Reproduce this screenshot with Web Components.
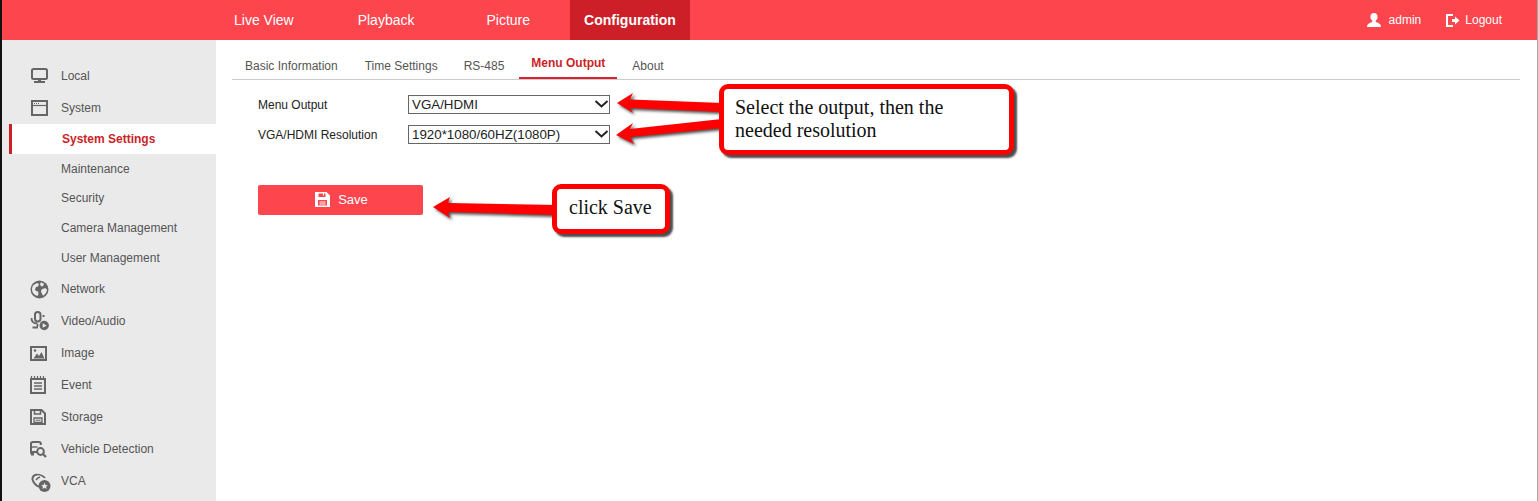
<!DOCTYPE html>
<html>
<head>
<meta charset="utf-8">
<title>Menu Output</title>
<style>
  html, body { margin: 0; padding: 0; background: #fff; }
  body { width: 1538px; height: 501px; overflow: hidden; font-family: "Liberation Sans", Arial, sans-serif; }
</style>
</head>
<body>
<web-app></web-app>

<template id="tpl-app">
  <style>
    :host { display: block; position: relative; width: 1538px; height: 501px; overflow: hidden; border-left: 2px solid #111; border-right: 1px solid #a8a8a8; box-sizing: border-box; }
    .edge { position: absolute; left: -2px; top: 79px; width: 2px; height: 19px; background: #0a7a12; }
    .body { display: flex; height: 461px; }
    side-menu { flex: none; }
    config-panel { flex: 1; }
  </style>
  <div class="edge"></div>
  <top-bar></top-bar>
  <div class="body">
    <side-menu></side-menu>
    <config-panel></config-panel>
  </div>
  <note-layer></note-layer>
</template>

<template id="tpl-top">
  <style>
    :host { display: flex; height: 40px; background: #fd454e; color: #fff; font-size: 14px; align-items: stretch; }
    nav { display: flex; margin-left: 218px; }
    a { display: flex; align-items: center; padding: 0 14px; }
    a.on { background: #cc1f27; font-weight: bold; }
    .user { margin-left: auto; display: flex; align-items: center; font-size: 12px; margin-right: 35px; }
    .user svg { display: block; fill: #fff; }
    .user span { margin-left: 7px; }
    .user .gap { margin-left: 25px; display: flex; align-items: center; }
    .user .gap span { margin-left: 5px; }
  </style>
  <nav>
    <a style="margin-right:36px">Live View</a>
    <a style="margin-right:44px">Playback</a>
    <a style="margin-right:26px">Picture</a>
    <a class="on">Configuration</a>
  </nav>
  <div class="user">
    <svg width="16" height="14" viewBox="0 0 16 14"><path d="M8 0c2.300 0 3.600 1.600 3.600 3.800 0 1.700-.8 3.200-1.900 4v1.300c2 .6 5.300 1.500 5.300 4.900H1c0-3.400 3.300-4.300 5.300-4.900V7.800C5.200 7 4.400 5.500 4.400 3.800 4.400 1.600 5.700 0 8 0z"/></svg>
    <span>admin</span>
    <div class="gap">
      <svg width="14" height="13" viewBox="0 0 14 13"><path d="M0 0h7v2H2v9h5v2H0zM6 5h3V2.500L13.500 6.500 9 10.500V8H6z"/></svg>
      <span>Logout</span>
    </div>
  </div>
</template>

<template id="tpl-item">
  <style>
    :host { display: flex; align-items: center; height: 32px; font-size: 12px; color: #555; padding-left: 28px; }
    .ico { width: 31px; flex: none; display: flex; align-items: center; }
    ::slotted(svg) { display: block; }
  </style>
  <div class="ico"><slot name="icon"></slot></div>
  <div><slot></slot></div>
</template>

<template id="tpl-sub">
  <style>
    :host { display: flex; align-items: center; height: 30px; font-size: 12px; color: #555; padding-left: 59px; }
    :host([active]) { background: #fff; color: #cc1f27; font-weight: bold; box-shadow: inset 3px 0 0 #cc1f27; margin-left: 7px; padding-left: 53px; }
    :host([short]) { height: 29px; }
  </style>
  <slot></slot>
</template>

<template id="tpl-side">
  <style>
    :host { display: block; width: 214px; height: 461px; background: #eaeaea; padding-top: 20px; box-sizing: border-box; overflow: hidden; }
    svg { fill: none; stroke: #666; stroke-width: 2; }
    svg .f { fill: #666; stroke: none; }
    svg .w { fill: #eaeaea; stroke: none; }
  </style>
  <menu-item>
    <svg slot="icon" width="19" height="16" viewBox="0 0 19 16"><rect x="2" y="1" width="15" height="10" rx="1.500"/><path class="f" d="M8 11h3v2.500H8zM4 13h11v2H4z"/></svg>
    Local
  </menu-item>
  <menu-item>
    <svg slot="icon" width="19" height="16" viewBox="0 0 19 16"><rect x="2" y="1" width="15" height="14"/><path d="M2 5.500h15" stroke-width="1.200"/><path d="M4 3.500h5" stroke-width="1" stroke-dasharray="1 1"/></svg>
    System
  </menu-item>
  <div>
    <menu-sub active>System Settings</menu-sub>
    <menu-sub short>Maintenance</menu-sub>
    <menu-sub>Security</menu-sub>
    <menu-sub>Camera Management</menu-sub>
    <menu-sub>User Management</menu-sub>
  </div>
  <menu-item>
    <svg slot="icon" width="19" height="19" viewBox="0 0 19 19"><circle class="f" cx="9.500" cy="9.500" r="9"/><path class="w" d="M3.500 5l3.500-2 2 1-1 2.500-2 .5-1 2.500 1 1.500 2 .5.500 2.500-1 2C4 15 2 12.500 2 9.500 2 7.800 2.600 6.200 3.500 5zM11 2.300l3 1.500-1 2.500h-2l-1-2zM11.500 9.500l3.500-1.500 2 1.500c0 2.500-1.500 5-4 6.300l-1-2-1-2z"/></svg>
    Network
  </menu-item>
  <menu-item>
    <svg slot="icon" width="19" height="20" viewBox="0 0 19 20"><rect x="5" y="1" width="5.500" height="9.500" rx="2.700"/><path d="M1.500 7c0 3.500 2.500 5.500 6 5.500M7.500 13v2.500M2.500 16.500h5.500" stroke-width="1.800"/><path class="f" d="M12.500 4h2v2h-2z"/><circle class="f" cx="14.200" cy="14.500" r="4.700"/><path class="w" d="M12.700 12.200l3.900 2.300-3.900 2.300z"/></svg>
    Video/Audio
  </menu-item>
  <menu-item>
    <svg slot="icon" width="18" height="15" viewBox="0 0 18 15"><rect x="1" y="1" width="15" height="13"/><path class="f" d="M3.500 12.500l3.500-5 2 2.500 2.500-4 3 6.500z"/><circle class="f" cx="5" cy="4.500" r="1.300"/></svg>
    Image
  </menu-item>
  <menu-item>
    <svg slot="icon" width="17" height="18" viewBox="0 0 17 18"><rect x="1" y="3" width="14" height="14"/><path d="M1.500 0v3M4.500 0v3M7.500 0v3M10.500 0v3M13.500 0v3" stroke-width="1.200"/><path d="M4 7h8M4 10h8M4 13h8" stroke-width="1.400"/></svg>
    Event
  </menu-item>
  <menu-item>
    <svg slot="icon" width="17" height="16" viewBox="0 0 17 16"><path d="M1 1h10.500L15 4.500V15H1z"/><path d="M4.500 1v4h6V1" stroke-width="1.600"/><path d="M4 9h8v4.500H4z" stroke-width="1.300"/><path d="M5.500 11.200h5" stroke-width="1"/></svg>
    Storage
  </menu-item>
  <menu-item>
    <svg slot="icon" width="18" height="17" viewBox="0 0 18 17"><path d="M7 11H1V2.500C1 1.500 1.800 1 3 1h6c1 0 1.800.5 1.800 1.500V4"/><path d="M1.500 6h6" stroke-width="1.400"/><path class="f" d="M0 11h4v3.500H1z"/><circle cx="10.500" cy="10.500" r="3.400"/><path d="M13 13l3 3" stroke-width="2.200"/></svg>
    Vehicle Detection
  </menu-item>
  <menu-item>
    <svg slot="icon" width="21" height="22" viewBox="0 0 21 22"><g transform="translate(0 3)"><path d="M6.500 1.500C4 2 2 4 2.500 6.500c.5 2 1.500 3.500 3.500 5.500 1 1 2.500 1.500 3.500 1.500"/><path d="M6 2c2-1 4-.5 6.500 1 1 .6 2 1.300 2.500 2" stroke-width="1.600"/><path d="M6 7c1-1.500 2.500-2.500 4-3" stroke-width="1.400"/><circle class="f" cx="14.500" cy="13" r="6"/><path class="w" d="M14.500 9.800l1 2.200 2.300.2-1.700 1.500.5 2.200-2.100-1.200-2.100 1.200.5-2.200-1.700-1.500 2.300-.2z"/></g></svg>
    VCA
  </menu-item>
</template>

<template id="tpl-panel">
  <style>
    :host { display: block; background: #fff; padding: 0 17px 0 16px; font-size: 12px; }
    .tabs { display: flex; align-items: flex-end; height: 39px; border-bottom: 1px solid #ccc; color: #555; }
    .tabs a { display: flex; align-items: center; height: 26px; padding: 0 13px; }
    .tabs a.on { color: #cc1f27; font-weight: bold; padding: 0 12px; height: 29px; border-bottom: 2px solid #d9232c; box-sizing: border-box; padding-bottom: 1px; }
    form { display: block; padding: 9px 0 0 26px; color: #222; }
    .row { display: flex; align-items: center; height: 30px; }
    .row label { width: 150px; flex: none; margin-top: 2px; }
    .save { margin-top: 36px; width: 165px; height: 30px; box-sizing: border-box; padding: 0 0 2px 2px; background: #fd454e; border-radius: 2px; color: #fff; display: flex; align-items: center; justify-content: center; font-size: 13px; }
    .save svg { margin-right: 8px; display: block; }
  </style>
  <div class="tabs">
    <a>Basic Information</a><a style="margin-left:1px">Time Settings</a><a>RS-485</a><a class="on" style="margin-left:2px">Menu Output</a><a style="margin-left:2px">About</a>
  </div>
  <form onsubmit="return false">
    <div class="row"><label>Menu Output</label><fake-select>VGA/HDMI</fake-select></div>
    <div class="row"><label>VGA/HDMI Resolution</label><fake-select>1920*1080/60HZ(1080P)</fake-select></div>
    <div class="save">
      <svg width="15" height="15" viewBox="0 0 15 15"><path fill="#fff" fill-rule="evenodd" d="M0 0h11.500L15 3.500V15H0zM3.500 1.500v3.500h7V1.500h-1.500v2H8v-2zM3 8v5.500h9V8zM4.500 9.500h6v1h-6zM4.500 11.500h6v1h-6z"/></svg>
      Save
    </div>
  </form>
</template>

<template id="tpl-select">
  <style>
    :host { display: flex; align-items: center; box-sizing: border-box; width: 202px; height: 19px; border: 1px solid #666; background: #fff; color: #222; font-size: 13.330px; padding-left: 3px; position: relative; }
    svg { position: absolute; right: 0; top: 1px; }
  </style>
  <slot></slot>
  <svg width="16" height="15" viewBox="0 0 16 15"><path d="M2.500 4l6 5.500 6-5.500" fill="none" stroke="#222" stroke-width="2"/></svg>
</template>

<template id="tpl-notes">
  <style>
    :host { position: absolute; inset: 0 0 0 -2px; display: block; pointer-events: none; }
    svg { position: absolute; left: 0; top: 0; filter: drop-shadow(2px 2px 1.500px rgba(0,0,0,.7)); }
    .box { position: absolute; box-sizing: border-box; background: #fff; border: 5px solid #f00; border-radius: 9px; box-shadow: 3px 3px 2px rgba(0,0,0,.7); color: #111; font-family: "Liberation Serif", "Times New Roman", serif; font-size: 20px; line-height: 23px; white-space: nowrap; }
    .a { left: 719px; top: 84px; width: 295px; height: 71px; padding: 7px 0 0 11px; }
    .b { left: 552px; top: 184px; width: 118px; height: 50px; padding: 7px 0 0 12px; }
  </style>
  <svg width="1538" height="501" viewBox="0 0 1538 501">
    <path fill="#f00" d="M617 103L633 93 630 99.500 722 103 722 112 630 108 633 113z"/>
    <path fill="#f00" d="M616 135L633 123 630 129 722 119 722 128 630 137 634 144z"/>
    <path fill="#f00" d="M433 207L450 197 448 203 556 205 556 215 448 212 450 218z"/>
  </svg>
  <div class="box a">Select the output, then the<br>needed resolution</div>
  <div class="box b">click Save</div>
</template>

<script>
  // cada elemento clona o seu template no shadow root
  function define(tag, tplId) {
    customElements.define(tag, class extends HTMLElement {
      constructor() {
        super();
        const shadow = this.attachShadow({ mode: 'open' });
        shadow.appendChild(document.getElementById(tplId).content.cloneNode(true));
      }
    });
  }

  define('top-bar', 'tpl-top');
  define('menu-item', 'tpl-item');
  define('menu-sub', 'tpl-sub');
  define('side-menu', 'tpl-side');
  define('fake-select', 'tpl-select');
  define('config-panel', 'tpl-panel');
  define('note-layer', 'tpl-notes');
  define('web-app', 'tpl-app');
</script>
</body>
</html>
